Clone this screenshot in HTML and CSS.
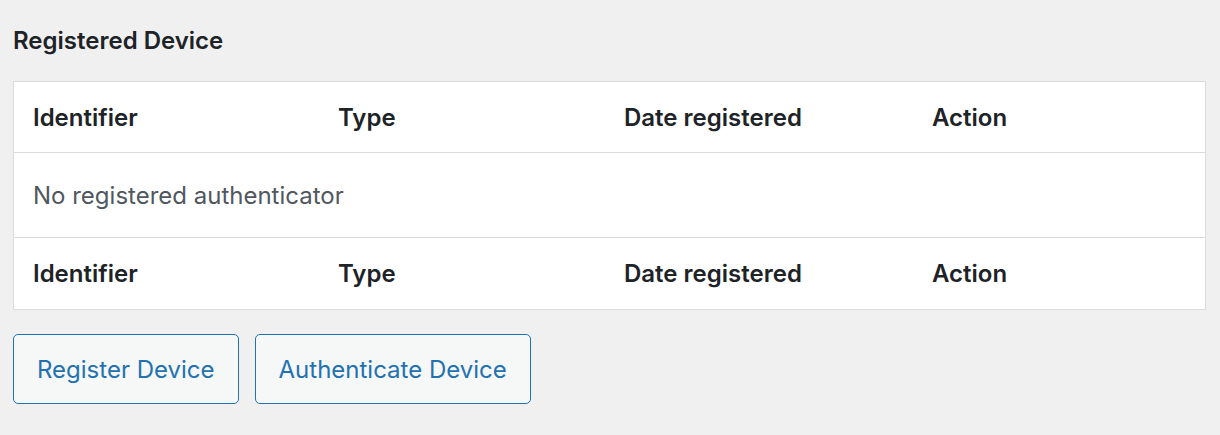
FILE: index.html
```html
<!DOCTYPE html>
<html lang="en">
<head>
  <meta charset="UTF-8">
  <meta name="viewport" content="width=device-width, initial-scale=1.0">
  <title>Registered Device</title>
  <link rel="stylesheet" href="styles.css">
</head>
<body>
  <div class="wrap">
    <h2>Registered Device</h2>
    <table class="devices">
      <thead>
        <tr>
          <th class="col-id">Identifier</th>
          <th class="col-type">Type</th>
          <th class="col-date">Date registered</th>
          <th class="col-action">Action</th>
        </tr>
      </thead>
      <tbody>
        <tr>
          <td colspan="4" class="empty">No registered authenticator</td>
        </tr>
      </tbody>
      <tfoot>
        <tr>
          <th class="col-id">Identifier</th>
          <th class="col-type">Type</th>
          <th class="col-date">Date registered</th>
          <th class="col-action">Action</th>
        </tr>
      </tfoot>
    </table>
    <div class="actions">
      <button class="button">Register Device</button>
      <button class="button">Authenticate Device</button>
    </div>
  </div>
</body>
</html>
```

FILE: styles.css
```css
body { margin: 0; background: #f0f0f1; font-family: Inter, "Noto Sans", sans-serif; color: #1d2327; }
.wrap { padding: 0 14px 0 13px; }
h2 { font-size: 24px; font-weight: 600; margin: 0; padding-top: 26px; height: 55px; line-height: 30px; }
.devices { width: 100%; border-collapse: collapse; background: #fff; border: 1px solid #dcdcde; table-layout: fixed; }
.devices th { text-align: left; font-size: 24px; font-weight: 600; color: #1d2327; padding: 0 19px; height: 70px; }
.devices thead th { border-bottom: 1px solid #dcdcde; }
.devices tfoot th { border-top: 1px solid #dcdcde; height: 71px; }
.col-id { width: 267px; }
.col-type { width: 248px; }
.col-date { width: 270px; }
.empty { font-size: 24px; color: #50575e; padding: 0 19px; height: 84px; }
.actions { display: flex; gap: 16px; margin-top: 24px; }
.button { font-family: inherit; font-size: 24px; color: #2271b1; background: #f6f7f7; border: 1px solid #2271b1; border-radius: 5px; height: 70px; padding: 0 23px; cursor: pointer; }
```
